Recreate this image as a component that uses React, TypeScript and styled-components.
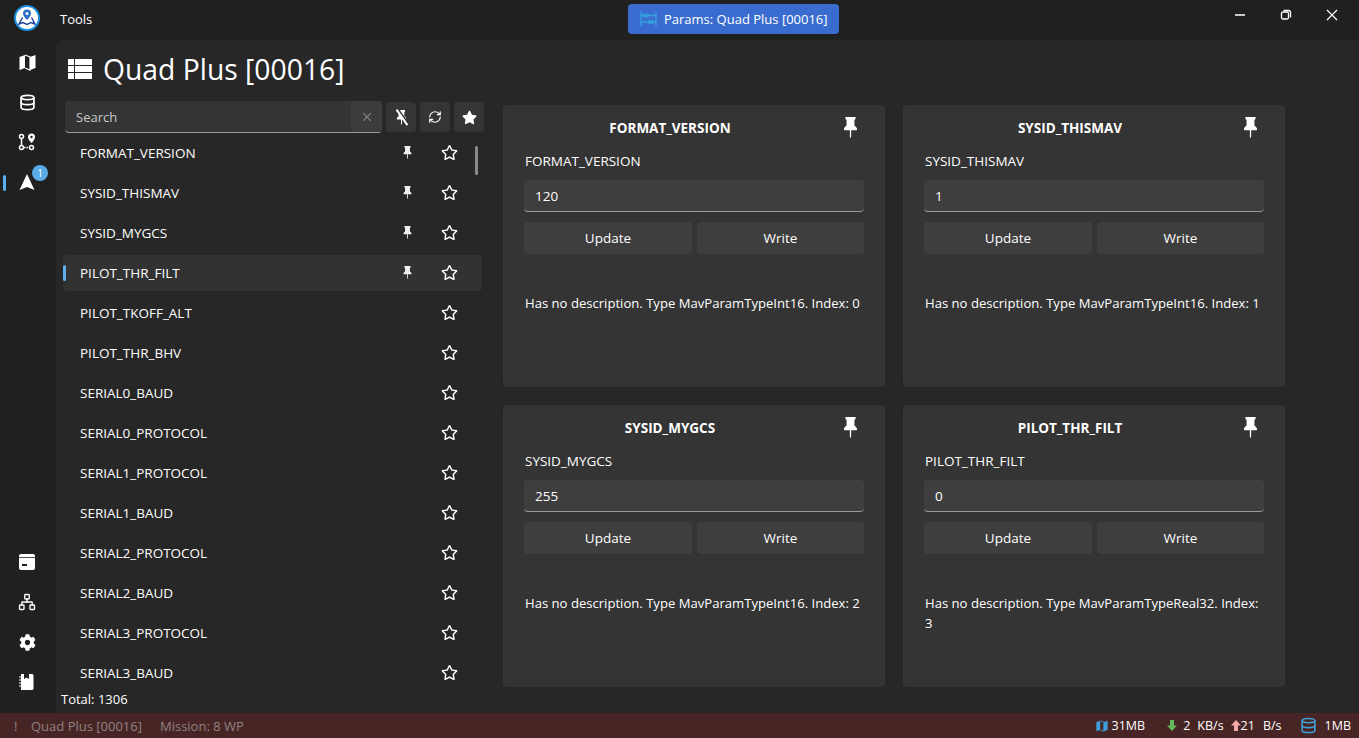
import React from 'react'
import styled, { createGlobalStyle } from 'styled-components'
import { BsPinFill } from 'react-icons/bs'
import { FaCog, FaRegStar, FaStar } from 'react-icons/fa'
import { Database, Network, RefreshCw, X } from 'lucide-react'

const GlobalStyle = createGlobalStyle`
  html, body { margin: 0; padding: 0; height: 100%; overflow: hidden; }
  body { background: #202020; color: #fff; font-family: "Open Sans", "Noto Sans", sans-serif; font-size: 13.5px; }
  * { box-sizing: border-box; }
`

const params = [
  'FORMAT_VERSION', 'SYSID_THISMAV', 'SYSID_MYGCS', 'PILOT_THR_FILT', 'PILOT_TKOFF_ALT', 'PILOT_THR_BHV',
  'SERIAL0_BAUD', 'SERIAL0_PROTOCOL', 'SERIAL1_PROTOCOL', 'SERIAL1_BAUD', 'SERIAL2_PROTOCOL', 'SERIAL2_BAUD',
  'SERIAL3_PROTOCOL', 'SERIAL3_BAUD',
]

const cards = [
  { name: 'FORMAT_VERSION', value: '120', desc: 'Has no description. Type MavParamTypeInt16. Index: 0' },
  { name: 'SYSID_THISMAV', value: '1', desc: 'Has no description. Type MavParamTypeInt16. Index: 1' },
  { name: 'SYSID_MYGCS', value: '255', desc: 'Has no description. Type MavParamTypeInt16. Index: 2' },
  { name: 'PILOT_THR_FILT', value: '0', desc: 'Has no description. Type MavParamTypeReal32. Index: 3' },
]

const Logo = () => (
  <svg width="26" height="26" viewBox="0 0 26 26">
    <circle cx="13" cy="13" r="12" fill="#fff" stroke="#1d8fe0" strokeWidth="2" />
    <path d="M13 4.500a4 4 0 0 1 4 4c0 2.600-4 6.500-4 6.500s-4-3.900-4-6.500a4 4 0 0 1 4-4z" fill="#2b6fc9" />
    <circle cx="13" cy="8.500" r="1.500" fill="#fff" />
    <path d="M8.500 12.500L5 19l4-1.500 4 2 4-2 4 1.500-3.500-6.500" fill="none" stroke="#24479b" strokeWidth="1.500" />
  </svg>
)

const MapIcon = ({ size = 17, color = '#fff' }: { size?: number; color?: string }) => (
  <svg width={size} height={size} viewBox="0 0 17 17">
    <path d="M0.500 3L6 1v13l-5.500 2z" fill={color} />
    <path d="M11 3l5.500-2v13L11 16z" fill={color} />
    <path d="M6 1l5 2v13l-5-2" fill="none" stroke={color} strokeWidth="1.200" />
  </svg>
)

const ListIcon = () => (
  <svg width="24" height="20" viewBox="0 0 24 20" fill="#fff">
    <rect x="0" y="0" width="6" height="6" />
    <rect x="7" y="0" width="17" height="6" />
    <rect x="0" y="7" width="6" height="6" />
    <rect x="7" y="7" width="17" height="6" />
    <rect x="0" y="14" width="6" height="6" />
    <rect x="7" y="14" width="17" height="6" />
  </svg>
)

const RouteIcon = () => (
  <svg width="18" height="18" viewBox="0 0 18 18" fill="none" stroke="#fff" strokeWidth="1.500">
    <circle cx="3.500" cy="3.500" r="2" />
    <circle cx="3.500" cy="14.500" r="2" />
    <circle cx="13.500" cy="14.500" r="2" />
    <path d="M3.500 5.500v7" />
    <path d="M6 14.500h5" strokeDasharray="1.500 1" />
    <path d="M13.500 0.500a3.500 3.500 0 0 1 3.500 3.500c0 2.400-3.500 6-3.500 6s-3.500-3.600-3.500-6a3.500 3.500 0 0 1 3.500-3.500z" fill="#fff" stroke="none" />
    <circle cx="13.500" cy="4" r="1.200" fill="#202020" stroke="none" />
  </svg>
)

const NavIcon = () => (
  <svg width="18" height="18" viewBox="0 0 18 18">
    <path d="M9 1l7.500 16L9 14l-7.500 3z" fill="#fff" />
  </svg>
)

const DriveIcon = () => (
  <svg width="18" height="18" viewBox="0 0 18 18">
    <path d="M3 1h12a2 2 0 0 1 2 2v12a2 2 0 0 1-2 2H3a2 2 0 0 1-2-2V3a2 2 0 0 1 2-2z" fill="#fff" />
    <path d="M1 4.500h16" stroke="#202020" strokeWidth="0.800" />
    <rect x="4" y="11" width="5" height="2" fill="#202020" />
  </svg>
)

const NotebookIcon = () => (
  <svg width="18" height="18" viewBox="0 0 18 18">
    <path d="M3 1h3v5l2.500-1.500L11 6V1h3a1.500 1.500 0 0 1 1.500 1.500v13A1.500 1.500 0 0 1 14 17H3z" fill="#fff" />
    <path d="M1 4h2M1 7h2M1 10h2M1 13h2" stroke="#fff" strokeWidth="1.200" />
  </svg>
)

const PinOffIcon = () => (
  <IconStack>
    <BsPinFill size={15} />
    <Slash />
  </IconStack>
)

const ParamsIcon = () => (
  <svg width="17" height="16" viewBox="0 0 17 16" fill="none" stroke="#35a3dc" strokeWidth="1.300">
    <path d="M1 0.500v15M16 0.500v15M1 4.500h15M1 11h15" />
    <path d="M4.500 2.500v4M7.500 2.500v4M9.500 9v4M12.500 9v4" strokeWidth="2" />
  </svg>
)

const ArrowDown = () => (
  <svg width="10" height="11" viewBox="0 0 10 11"><path d="M3 0h4v5.500h3L5 11 0 5.500h3z" fill="#62b85c" /></svg>
)

const ArrowUp = () => (
  <svg width="10" height="11" viewBox="0 0 10 11"><path d="M3 11h4V5.500h3L5 0 0 5.500h3z" fill="#f7a8a8" /></svg>
)

const App = () => {
  return (
    <Page>
      <GlobalStyle />
      <TitleBar>
        <LogoSlot><Logo /></LogoSlot>
        <TitleText>Tools</TitleText>
        <TabButton><ParamsIcon />Params: Quad Plus [00016]</TabButton>
        <WindowControls>
          <WindowButton>
            <svg width="12" height="12" viewBox="0 0 12 12"><path d="M1 6h10" stroke="#fff" strokeWidth="1.500" /></svg>
          </WindowButton>
          <WindowButton>
            <svg width="12" height="12" viewBox="0 0 12 12" fill="none" stroke="#fff" strokeWidth="1.300"><rect x="1.500" y="3" width="7" height="7" rx="1.500" /><path d="M3.500 1.500h5a2 2 0 0 1 2 2v5" /></svg>
          </WindowButton>
          <WindowButton>
            <svg width="12" height="12" viewBox="0 0 12 12"><path d="M1 1l10 10M11 1L1 11" stroke="#fff" strokeWidth="1.200" /></svg>
          </WindowButton>
        </WindowControls>
      </TitleBar>
      <Middle>
        <SideBar>
          <SideGroup>
            <SideItem><MapIcon /></SideItem>
            <SideItem><Database size={17} strokeWidth={2.4} /></SideItem>
            <SideItem><RouteIcon /></SideItem>
            <SideItem $active>
              <NavIcon />
              <Badge>1</Badge>
            </SideItem>
          </SideGroup>
          <SideGroup>
            <SideItem><DriveIcon /></SideItem>
            <SideItem><Network size={18} strokeWidth={1.8} /></SideItem>
            <SideItem><FaCog size={17} /></SideItem>
            <SideItem><NotebookIcon /></SideItem>
          </SideGroup>
        </SideBar>
        <Content>
          <Heading>
            <ListIcon />
            <HeadingText>Quad Plus [00016]</HeadingText>
          </Heading>
          <Columns>
            <ListColumn>
              <SearchRow>
                <SearchBox>
                  <SearchLabel>Search</SearchLabel>
                  <ClearButton><X size={14} /></ClearButton>
                </SearchBox>
                <ToolButton><PinOffIcon /></ToolButton>
                <ToolButton><RefreshCw size={14} /></ToolButton>
                <ToolButton><FaStar size={15} /></ToolButton>
              </SearchRow>
              <ParamList>
                <ScrollThumb />
                {params.map((p, i) => (
                  <ParamRow key={p} $selected={p === 'PILOT_THR_FILT'}>
                    <ParamName>{p}</ParamName>
                    <PinSlot>{i < 4 && <BsPinFill size={13} />}</PinSlot>
                    <StarSlot><FaRegStar size={17} /></StarSlot>
                  </ParamRow>
                ))}
              </ParamList>
              <Total>Total: 1306</Total>
            </ListColumn>
            <CardGrid>
              {cards.map((c) => (
                <Card key={c.name}>
                  <CardHeader>
                    <CardTitle>{c.name}</CardTitle>
                    <CardPin><BsPinFill size={21} /></CardPin>
                  </CardHeader>
                  <FieldLabel>{c.name}</FieldLabel>
                  <ValueBox>{c.value}</ValueBox>
                  <ButtonRow>
                    <ActionButton>Update</ActionButton>
                    <ActionButton>Write</ActionButton>
                  </ButtonRow>
                  <Description>{c.desc}</Description>
                </Card>
              ))}
            </CardGrid>
          </Columns>
        </Content>
      </Middle>
      <StatusBar>
        <Warn>!</Warn>
        <StatusDim>Quad Plus [00016]</StatusDim>
        <StatusDim>Mission: 8 WP</StatusDim>
        <StatusRight>
          <StatGroup $gap={4}><MapIcon size={12} color="#3f9fd8" /><span>31MB</span></StatGroup>
          <StatGroup $gap={6} $left={22}><ArrowDown /><span>2</span></StatGroup>
          <StatGroup $gap={0} $left={7}><span>KB/s</span></StatGroup>
          <StatGroup $gap={0} $left={7}><ArrowUp /><span>21</span></StatGroup>
          <StatGroup $gap={0} $left={8}><span>B/s</span></StatGroup>
          <StatGroup $gap={8} $left={18}><Database size={17} color="#3f9fd8" strokeWidth={2.200} /><span>1MB</span></StatGroup>
        </StatusRight>
      </StatusBar>
    </Page>
  )
}

export default App

const Page = styled.div`
  width: 1359px;
  height: 738px;
  display: flex;
  flex-direction: column;
  overflow: hidden;
`

const TitleBar = styled.div`
  height: 40px;
  flex: none;
  display: flex;
  align-items: center;
  background: #202020;
`

const LogoSlot = styled.div`
  width: 54px;
  display: flex;
  justify-content: center;
  margin-top: -4px;
`

const TitleText = styled.div`
  width: 574px;
  padding-left: 6px;
  margin-top: -3px;
  font-size: 13px;
`

const TabButton = styled.div`
  width: 211px;
  height: 30px;
  margin-top: -2px;
  display: flex;
  align-items: center;
  gap: 7px;
  padding-left: 12px;
  background: #3a6cd0;
  border-radius: 4px;
  font-size: 13px;
  white-space: nowrap;
`

const WindowControls = styled.div`
  margin-left: auto;
  display: flex;
  margin-right: 4px;
  margin-top: -10px;
`

const WindowButton = styled.div`
  width: 46px;
  display: flex;
  justify-content: center;
`

const Middle = styled.div`
  flex: 1;
  min-height: 0;
  display: flex;
`

const SideBar = styled.div`
  width: 56px;
  flex: none;
  display: flex;
  flex-direction: column;
  justify-content: space-between;
  padding: 2px 0 11px;
`

const SideGroup = styled.div`
  display: flex;
  flex-direction: column;
`

const SideItem = styled.div<{ $active?: boolean }>`
  position: relative;
  height: 40px;
  width: 54px;
  display: flex;
  align-items: center;
  justify-content: center;
  color: #fff;
  &::before {
    content: '';
    display: ${(p) => (p.$active ? 'block' : 'none')};
    position: absolute;
    left: 3px;
    top: 13px;
    width: 3px;
    height: 16px;
    border-radius: 2px;
    background: #5db0f0;
  }
`

const Badge = styled.div`
  position: absolute;
  left: 32px;
  top: 3px;
  width: 16px;
  height: 16px;
  border-radius: 50%;
  background: #5aabe8;
  font-size: 10px;
  display: flex;
  align-items: center;
  justify-content: center;
`

const Content = styled.div`
  flex: 1;
  min-width: 0;
  display: flex;
  flex-direction: column;
  background: #272727;
  border-top-left-radius: 8px;
  padding: 0 0 0 7px;
`

const Heading = styled.div`
  height: 61px;
  flex: none;
  display: flex;
  align-items: center;
  gap: 11px;
  padding: 0 0 4px 5px;
`

const HeadingText = styled.div`
  font-size: 28.300px;
`

const Columns = styled.div`
  flex: 1;
  min-height: 0;
  display: flex;
`

const ListColumn = styled.div`
  width: 423px;
  flex: none;
  display: flex;
  flex-direction: column;
  margin-left: -2px;
`

const SearchRow = styled.div`
  flex: none;
  height: 32px;
  display: flex;
  align-items: center;
  padding-left: 4px;
  gap: 4px;
`

const SearchBox = styled.div`
  flex: none;
  width: 317px;
  height: 32px;
  display: flex;
  align-items: stretch;
  justify-content: space-between;
  background: #343434;
  border-radius: 4px;
  border-bottom: 1.5px solid #9a9a9a;
`

const SearchLabel = styled.div`
  padding-left: 11px;
  display: flex;
  align-items: center;
  color: #c8c8c8;
  font-size: 13px;
`

const ClearButton = styled.div`
  width: 31px;
  display: flex;
  align-items: center;
  justify-content: center;
  background: #3c3c3c;
  color: #7d7d7d;
  border-radius: 0 4px 0 0;
`

const ToolButton = styled.div`
  flex: none;
  width: 30px;
  height: 30px;
  display: flex;
  align-items: center;
  justify-content: center;
  background: #353535;
  border-radius: 4px;
`

const IconStack = styled.div`
  position: relative;
  display: flex;
`

const Slash = styled.div`
  position: absolute;
  left: 7px;
  top: -2px;
  width: 1.500px;
  height: 19px;
  background: #fff;
  box-shadow: 1.500px 0 0 #353535;
  transform: rotate(-35deg);
`

const ParamList = styled.div`
  position: relative;
  flex: 1;
  min-height: 0;
  overflow: hidden;
  display: flex;
  flex-direction: column;
  gap: 4px;
  padding: 2px 0 0 2px;
`

const ScrollThumb = styled.div`
  position: absolute;
  left: 414px;
  top: 13px;
  width: 3px;
  height: 29px;
  border-radius: 2px;
  background: #8a8a8a;
`

const ParamRow = styled.div<{ $selected?: boolean }>`
  position: relative;
  flex: none;
  width: 419px;
  height: 36px;
  display: flex;
  align-items: center;
  padding-left: 17px;
  border-radius: 4px;
  background: ${(p) => (p.$selected ? '#323232' : 'transparent')};
  &::before {
    content: '';
    display: ${(p) => (p.$selected ? 'block' : 'none')};
    position: absolute;
    left: 0;
    top: 10px;
    width: 3px;
    height: 16px;
    border-radius: 2px;
    background: #5db0f0;
  }
`

const ParamName = styled.div`
  width: 306px;
  font-size: 13.500px;
`

const PinSlot = styled.div`
  width: 42px;
  margin-top: -1px;
  display: flex;
  justify-content: center;
  color: #f0f0f0;
`

const StarSlot = styled.div`
  width: 42px;
  margin-top: -2px;
  display: flex;
  justify-content: center;
`

const Total = styled.div`
  flex: none;
  height: 27px;
  padding-bottom: 2px;
  display: flex;
  align-items: center;
  font-size: 13px;
`

const CardGrid = styled.div`
  display: grid;
  grid-template-columns: 382px 382px;
  grid-auto-rows: 282px;
  gap: 18px;
  margin: 4px 0 0 19px;
`

const Card = styled.div`
  background: #343434;
  border-radius: 4px;
  padding: 0 21px;
  display: flex;
  flex-direction: column;
`

const CardHeader = styled.div`
  position: relative;
  height: 46px;
  flex: none;
  display: flex;
  align-items: center;
  justify-content: center;
  padding-right: 48px;
`

const CardTitle = styled.div`
  font-size: 13.500px;
  font-weight: 700;
`

const CardPin = styled.div`
  position: absolute;
  right: -1px;
  top: 12px;
  width: 30px;
  display: flex;
  justify-content: center;
`

const FieldLabel = styled.div`
  flex: none;
  height: 20px;
  margin-bottom: 9px;
  padding-left: 1px;
  display: flex;
  align-items: center;
  font-size: 13.500px;
`

const ValueBox = styled.div`
  flex: none;
  height: 32px;
  display: flex;
  align-items: center;
  padding-left: 11px;
  background: #3e3e3e;
  border-radius: 4px;
  border-bottom: 1.5px solid #9a9a9a;
  font-size: 13.500px;
`

const ButtonRow = styled.div`
  flex: none;
  margin-top: 10px;
  display: grid;
  grid-template-columns: 168px 167px;
  gap: 5px;
`

const ActionButton = styled.div`
  height: 32px;
  display: flex;
  align-items: center;
  justify-content: center;
  background: #3e3e3e;
  border-radius: 4px;
  font-size: 13.500px;
`

const Description = styled.div`
  margin-top: 39px;
  padding-left: 1px;
  font-size: 13.100px;
  line-height: 20px;
`

const StatusBar = styled.div`
  height: 25px;
  flex: none;
  display: flex;
  align-items: center;
  background: #472525;
  font-size: 13px;
`

const Warn = styled.div`
  width: 31px;
  padding-left: 14px;
  color: #8f8282;
`

const StatusDim = styled.div`
  color: #8f8282;
  margin-right: 18px;
`

const StatusRight = styled.div`
  margin-left: auto;
  margin-right: 8px;
  display: flex;
  align-items: center;
  font-size: 12.500px;
`

const StatGroup = styled.div<{ $gap: number; $left?: number }>`
  display: flex;
  align-items: center;
  gap: ${(p) => p.$gap}px;
  margin-left: ${(p) => p.$left ?? 0}px;
`
